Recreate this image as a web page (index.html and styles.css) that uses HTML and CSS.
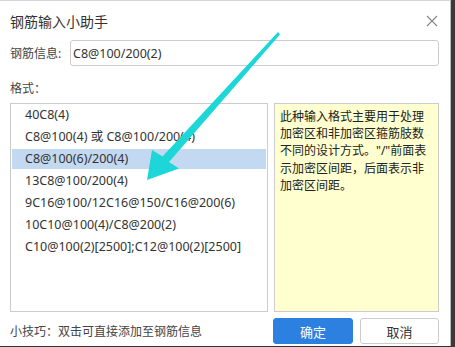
FILE: index.html
```html
<!DOCTYPE html>
<html lang="zh-CN">
<head>
    <meta charset="UTF-8">
    <title>钢筋输入小助手</title>
    <link rel="stylesheet" href="styles.css">
</head>
<body>
    <div class="dialog">
        <div class="header">
            <span class="title">钢筋输入小助手</span>
            <span class="close">
                <svg width="12" height="12" viewBox="0 0 12 12"><path d="M1 1L11 11M11 1L1 11" stroke="#8a8a8a" stroke-width="1.2"/></svg>
            </span>
        </div>
        <div class="field">
            <label class="field-label">钢筋信息:</label>
            <input class="field-input" type="text" value="C8@100/200(2)">
        </div>
        <div class="section-label">格式<span class="punct">：</span></div>
        <div class="main">
            <ul class="format-list">
                <li>40C8(4)</li>
                <li>C8@100(4) 或 C8@100/200(4)</li>
                <li class="selected">C8@100(6)/200(4)</li>
                <li>13C8@100/200(4)</li>
                <li>9C16@100/12C16@150/C16@200(6)</li>
                <li>10C10@100(4)/C8@200(2)</li>
                <li>C10@100(2)[2500];C12@100(2)[2500]</li>
            </ul>
            <div class="note">此种输入格式主要用于处理加密区和非加密区箍筋肢数不同的设计方式。"/"前面表示加密区间距<span class="punct">，</span>后面表示非加密区间距。</div>
        </div>
        <div class="footer">
            <span class="tip">小技巧<span class="punct">：</span>双击可直接添加至钢筋信息</span>
            <button class="btn btn-primary">确定</button>
            <button class="btn">取消</button>
        </div>
    </div>
    <div class="side"></div>

    <!-- annotation arrow drawn over the dialog -->
    <svg class="arrow" width="455" height="347" viewBox="0 0 455 347">
        <path d="M278 32 L280 34.5 L169 162 L179 168.5 L147 180 L152 150 L162.5 156.5 Z" fill="#1cd6d8"/>
    </svg>
</body>
</html>
```

FILE: styles.css
```css
body {
    margin: 0;
    width: 455px;
    height: 347px;
    display: flex;
    background-color: #333;
    font-family: "Noto Sans", "Noto Sans CJK SC", sans-serif;
    font-size: 12px;
    color: #333;
    overflow: hidden;
    position: relative;
}
.dialog {
    width: 451px;
    height: 346px;
    background-color: #fff;
    border-top: 1px solid #d6d6d6;
    border-right: 1px solid #b8b8b8;
    display: flex;
    flex-direction: column;
    padding: 0 11px 0 10px;
    box-sizing: border-box;
}
.side {
    flex: 1;
    background-color: #3a3a3a;
}
.header {
    height: 39px;
    display: flex;
    align-items: center;
    justify-content: space-between;
}
.title {
    font-size: 14px;
    color: #333;
}
.close {
    display: flex;
    margin-right: 1px;
}
.punct {
    font-family: "Noto Sans CJK TC", sans-serif;
}
.field {
    display: flex;
    align-items: center;
}
.field-label {
    width: 60px;
    color: #444;
}
.field-input {
    flex: 1;
    height: 26px;
    box-sizing: border-box;
    border: 1px solid #ccc;
    border-radius: 3px;
    padding: 0 2px;
    font-family: inherit;
    font-size: 12.5px;
    color: #333;
    outline: none;
}
.section-label {
    margin-top: 13px;
    line-height: 18px;
    color: #444;
}
.main {
    display: flex;
    gap: 6px;
    margin-top: 5px;
    height: 209px;
}
.format-list {
    list-style: none;
    margin: 0;
    padding: 1px;
    width: 258px;
    box-sizing: border-box;
    border: 1px solid #ccc;
}
.format-list li {
    height: 20px;
    line-height: 20px;
    margin-bottom: 2px;
    padding-left: 13px;
    font-size: 12.5px;
    white-space: nowrap;
}
.format-list li.selected {
    background-color: #c3d9f1;
}
.note {
    flex: 1;
    box-sizing: border-box;
    border: 1px solid #ccc;
    background-color: #ffffcf;
    padding: 4px 4px 0 5px;
    line-height: 17px;
    color: #222;
}
.footer {
    display: flex;
    align-items: center;
    margin-top: 6px;
    gap: 7px;
}
.tip {
    flex: 1;
    color: #444;
}
.btn {
    width: 79px;
    height: 26px;
    border: 1px solid #ccc;
    border-radius: 3px;
    background-color: #fff;
    font-family: inherit;
    font-size: 13px;
    color: #333;
    cursor: pointer;
}
.btn-primary {
    width: 80px;
    background-color: #2c80df;
    border-color: #2c80df;
    color: #fff;
}
.arrow {
    position: absolute;
    left: 0;
    top: 0;
}
```
